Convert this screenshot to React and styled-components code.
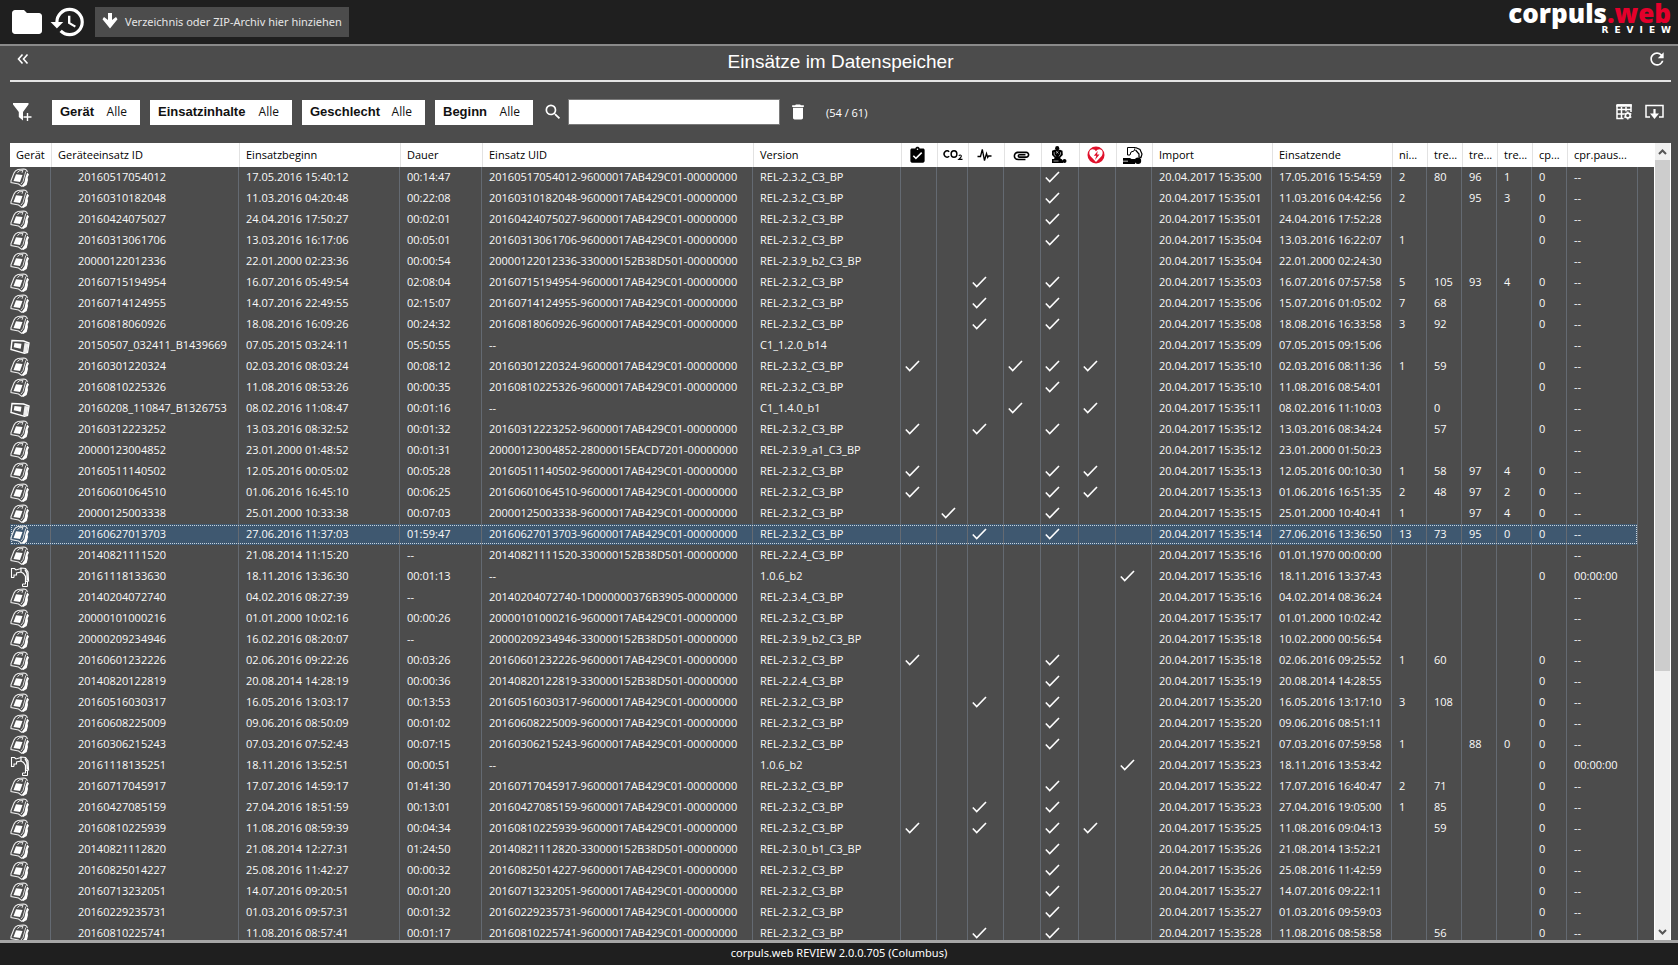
import React from "react";
import styled, { createGlobalStyle, css } from "styled-components";
import { MdFolder, MdHistory, MdRefresh, MdSearch, MdDelete, MdAssignmentTurnedIn, MdAttachment } from "react-icons/md";

const Global = createGlobalStyle`
  *, *::before, *::after { box-sizing: border-box; }
  html, body { margin: 0; background: #4c4c4c; }
  body, button, input {
    font-family: "Open Sans", "Noto Sans", sans-serif;
    font-size: 11px;
    color: #fff;
  }
  svg { display: block; flex: none; }
`;

const Page = styled.div`
  display: flex;
  flex-direction: column;
  height: 100vh;
  overflow: hidden;
`;

const TopBar = styled.header`
  display: flex;
  align-items: center;
  height: 46px;
  flex: none;
  padding: 0 7px 0 9px;
  background: #1f1f1f;
  border-bottom: 2px solid #8a8a8a;
`;

const IconButton = styled.button`
  display: flex;
  align-items: center;
  justify-content: center;
  flex: none;
  width: ${(p) => p.$w || 20}px;
  height: ${(p) => p.$h || 20}px;
  padding: 0;
  border: 0;
  background: none;
  color: #fff;
`;

const DropButton = styled.button`
  display: flex;
  align-items: center;
  gap: 7px;
  width: 254px;
  height: 30px;
  margin-left: 4px;
  padding: 0 7px 2px;
  border: 0;
  background: #4c4c4c;
  color: #e6e6e6;
  font-family: "Noto Sans", sans-serif;
  white-space: nowrap;
`;

const Logo = styled.div`
  display: flex;
  flex-direction: column;
  align-items: flex-end;
  align-self: flex-start;
  margin-left: auto;
`;

const Brand = styled.div`
  height: 25px;
  font: 800 26px/26px "Open Sans", sans-serif;
  span { color: #e4002b; }
`;

const BrandSub = styled.div`
  font: 700 9px/10px "DejaVu Sans", sans-serif;
  letter-spacing: 6px;
  margin-right: -6px;
`;

const Heading = styled.div`
  display: grid;
  grid-template-columns: 40px 1fr 40px;
  align-items: center;
  height: 36px;
  flex: none;
  margin: 0 7px 0 10px;
  padding: 0 4px 8px 3px;
  border-bottom: 2px solid #e4e4e4;
  & > :last-child { justify-self: end; }
`;

const Title = styled.h1`
  margin: 0;
  padding: 6px 0 0 1px;
  text-align: center;
  font: 400 19px/20px "Liberation Sans", Arial, sans-serif;
`;

const Toolbar = styled.div`
  display: flex;
  align-items: center;
  height: 61px;
  flex: none;
  padding: 0 14px 1px 12px;
`;

const Filters = styled.div`
  display: flex;
  gap: 10px;
  margin: 0 10px 0 20px;
`;

const FilterButton = styled.button`
  display: flex;
  align-items: center;
  justify-content: space-between;
  width: ${(p) => p.$w}px;
  height: 25px;
  padding: 0 13px 1px 8px;
  border: 0;
  background: #fff;
  color: #111;
  font-size: 12px;
  b { font: 700 13px/20px "Liberation Sans", Arial, sans-serif; }
`;

const SearchLabel = styled.label`
  display: flex;
  align-items: center;
  gap: 5px;
`;

const SearchInput = styled.input`
  width: 212px;
  height: 26px;
  border: 1px solid #7a7a7a;
  background: #fff;
  color: #111;
`;

const Count = styled.span`
  margin-left: 10px;
`;

const Tools = styled.div`
  display: flex;
  gap: 10px;
  margin-left: auto;
`;

const Content = styled.main`
  display: flex;
  flex: 1;
  min-height: 0;
  margin: 0 7px 0 10px;
`;

const TablePane = styled.div`
  flex: 1;
  min-width: 0;
  overflow: hidden;
  padding-right: 16px;
  background: linear-gradient(#fff 24px, transparent 24px);
`;

const Table = styled.table`
  width: 100%;
  table-layout: fixed;
  border-collapse: separate;
  border-spacing: 0;
  color: #fafafa;
`;

const HeadCell = styled.th`
  height: 24px;
  padding: 0 2px 1px 6px;
  border-left: 1px solid #e2e2e2;
  background: #fff;
  color: #000;
  font-weight: 400;
  line-height: 20px;
  text-align: left;
  white-space: nowrap;
  overflow: hidden;
  &:first-child { border-left-color: #fff; padding-left: 5px; }
  ${(p) => p.$icon && css`
    padding: 0 4px 0 0;
    svg { margin: 0 auto; }
  `}
`;

const Row = styled.tr`
  ${(p) => p.$selected && css`
    background: #3f5870;
    outline: 1px dotted #c8d4de;
    outline-offset: -2px;
  `}
`;

const Cell = styled.td`
  height: 21px;
  padding: 0 0 ${(p) => (p.$pad === 0 ? 0 : 2)}px ${(p) => (p.$pad === undefined ? 7 : p.$pad)}px;
  border-right: 1px solid #646a72;
  line-height: 19px;
  white-space: nowrap;
`;

const Scrollbar = styled.div`
  display: flex;
  flex-direction: column;
  width: 17px;
  flex: none;
  border: solid #fff;
  border-width: 0 1px;
  background: #f0f0f0;
`;

const ScrollTrack = styled.div`
  flex: 1;
  min-height: 0;
`;

const ScrollThumb = styled.div`
  height: 67%;
  background: #cdcdcd;
`;

const ScrollArrow = styled(IconButton)`
  width: 15px;
  height: 17px;
  color: #555;
`;

const Footer = styled.footer`
  height: 25px;
  flex: none;
  border-top: 3px solid #a6a6a6;
  background: #1f1f1f;
  font-family: "Noto Sans", sans-serif;
  text-align: center;
  line-height: 20px;
`;

const ArrowDown = () => (
  <svg width="16" height="18" viewBox="0 0 16 18">
    <path d="M6 1h4v7l4-3 1.500 2.200L8 16.500.500 7.200 2 5l4 3z" fill="#fff" />
  </svg>
);

const Chevrons = () => (
  <svg width="12" height="12" viewBox="0 0 12 12" fill="none" stroke="#fff" strokeWidth="1.600">
    <path d="M5.500 1.500 1.500 6l4 4.500M10.500 1.500 6.500 6l4 4.500" />
  </svg>
);

const FilterAdd = () => (
  <svg width="20" height="18" viewBox="0 0 20 18">
    <path d="M1 0h15.500v1.500L11 9v8.500L6.800 14V9L1 1.500z" fill="#fff" />
    <path d="M15.500 10v8M11.500 14h8" stroke="#fff" strokeWidth="1.400" />
  </svg>
);

const TableGear = () => (
  <svg width="16" height="16" viewBox="0 0 16 16" fill="none" stroke="#fff">
    <path d="M1 1h14v7M1 1v13.500h6.500M1 5.500h14M1 10h7M5.500 3v11.500M10 3v4.500" strokeWidth="1.500" />
    <path d="M.300 1.500h15.400" strokeWidth="2.500" />
    <circle cx="11.800" cy="11.500" r="2.400" strokeWidth="1.600" />
    <path d="M11.800 7.500v1.300M11.800 14.200v1.300M8.300 9.500l1.100.600M14.200 12.900l1.100.600M8.300 13.500l1.100-.600M14.200 10.100l1.100-.600" strokeWidth="1.500" />
  </svg>
);

const Export = () => (
  <svg width="19" height="16" viewBox="0 0 19 16" fill="none" stroke="#fff" strokeWidth="1.500">
    <path d="M5 13H1V1.500h17V13h-4" />
    <path d="M9.500 5v6" strokeWidth="2.200" />
    <path d="M5 9.500h9L9.500 15z" fill="#fff" stroke="none" />
  </svg>
);

const Check = () => (
  <svg width="15" height="12" viewBox="0 0 15 12" fill="none" stroke="#fff" strokeWidth="1.600">
    <path d="M.800 6.500 4.700 10.500 14 1" />
  </svg>
);

const Co2 = () => (
  <svg width="23" height="12" viewBox="-3 0 23 12" fill="none" stroke="#000" strokeWidth="1.400">
    <path d="M6.200 2.700A3 3.200 0 1 0 6.200 7.300" />
    <ellipse cx="11" cy="5" rx="2.900" ry="3.200" />
    <path d="M15.800 6.800q1.400-1.400 2.400-.300.700 1.200-2.400 3.900h3.700" strokeWidth="1.100" />
  </svg>
);

const Pulse = () => (
  <svg width="15" height="14" viewBox="0 0 15 14" fill="none" stroke="#000" strokeWidth="1.300">
    <path d="M.500 8.500h3l1.800-7 2.200 11 2-7 1.200 4 .900-1.500h2.900" />
  </svg>
);

const Cpr = () => (
  <svg width="16" height="18" viewBox="0 0 16 18">
    <ellipse cx="6.200" cy="2.300" rx="2.100" ry="2.200" />
    <path d="M1 4.800 3.500 3.800h5.500l2.500 1 .300 4.200-2.500 2.500.500 2H3l.500-2L1 9z" />
    <path d="M3.200 6.200v2l1.500 2.200M9.500 6.200v2l-1.500 2.200M5 5.200l2.500 2.300M7.500 5.200 5 7.500" fill="none" stroke="#fff" strokeWidth=".600" />
    <path d="M1 13h9.500l1.500 1.500V17H1z" />
    <path d="M2.500 15h5" stroke="#fff" strokeWidth=".600" />
    <circle cx="13.500" cy="15" r="2" />
  </svg>
);

const HeartBolt = () => (
  <svg width="18" height="18" viewBox="0 0 18 18">
    <circle cx="9" cy="9" r="8.500" fill="#e0112b" />
    <path d="M9 16 3.300 10C1.300 7 2.500 3.300 5.500 3.300 7.200 3.300 8.300 4.200 9 5.500c.7-1.300 1.800-2.200 3.500-2.200 3 0 4.200 3.700 2.200 6.700z" fill="#fff" />
    <path d="M10.800 5 6.800 9.800h2.500L8 14l4.500-5.500H10z" fill="#e0112b" />
  </svg>
);

const CprMachine = () => (
  <svg width="20" height="19" viewBox="0 0 20 19">
    <path d="M4.500 9V1.500h8L11 5l-3 1-1 3z" fill="#fff" stroke="#000" strokeWidth="1" />
    <path d="M12.500 1.500 17 3.500l2 4.500-1 3.500-2-.500V8l-3.500-4" fill="#fff" stroke="#000" strokeWidth="1.200" />
    <path d="M0 12h7l1.500 1H12v5H0v-2.500h5v-.700H0z" />
    <circle cx="15" cy="14.800" r="3.200" />
  </svg>
);

const Monitor = () => (
  <svg width="20" height="20" viewBox="0 0 20 20" fill="none" stroke="#eee">
    <path d="M12 18.500 8.500 16 1 14.500V12.500L4 5Q5 2.500 8 1.500L13.500 1Q17 1.200 17.300 4" strokeWidth="1.100" />
    <path d="M7.500 4.800 9 2.800l4-.300-1 2.300M15.800 3.500 13 13.500l-2 2.500" strokeWidth=".900" />
    <path d="M6 6.300l6.500.700-2.500 7-6.500-1z" fill="#fff" stroke="none" />
    <path d="M17.200 4.500 19 6.500l-1.300 2.800L18 12l-1.300 5-3.500 2-1.700-.800L14.500 14l1-5z" fill="#fff" stroke="none" />
  </svg>
);

const Tablet = () => (
  <svg width="20" height="20" viewBox="0 0 20 20">
    <path d="M2 4.500 13.500 5 19 7l-1.500 9.500-3 .800L1 13.500z" fill="none" stroke="#fff" strokeWidth="1.400" />
    <path d="M4.500 7l7 .800-.800 5-7-1.600z" fill="#fff" />
    <path d="M14.500 7 13 17l4-.500L18.500 7.500z" fill="#eee" />
  </svg>
);

const Arm = () => (
  <svg width="20" height="20" viewBox="0 0 20 20" fill="none" stroke="#fff">
    <path d="M4 10.500H1.500V1.500h3L6 3l5-1.500M4 10.500V8h2.500V6L11 5" strokeWidth="1.100" />
    <path d="M11 1l4.500.500L18 5l.500 9-3 .500v-5L13.500 6.500 11 5z" strokeWidth="1.200" />
    <path d="M15 2.500l2 4 .300 7" strokeWidth="1.500" />
    <path d="M12.500 17h3v-2.500h2v5h-5z" strokeWidth="1" />
  </svg>
);

const devices = { m: Monitor, t: Tablet, a: Arm };

const columns = [
  [41, "Gerät"], [188, "Geräteeinsatz ID"], [161, "Einsatzbeginn"], [82, "Dauer"],
  [271, "Einsatz UID"], [148, "Version"],
  [36, <MdAssignmentTurnedIn size={19} />], [31, <Co2 />], [36, <Pulse />],
  [37, <MdAttachment size={19} />], [38, <Cpr />], [37, <HeartBolt />], [36, <CprMachine />],
  [120, "Import"], [120, "Einsatzende"], [35, "ni..."], [35, "tre..."], [35, "tre..."],
  [35, "tre..."], [35, "cp..."], [71, "cpr.paus..."],
];

const A = "-96000017AB429C01-00000000";
const B = "-330000152B38D501-00000000";
const R = "REL-2.3.2_C3_BP";

// device, id, begin, duration, uid suffix or full uid, version, content flags, import second, end, values
const missions = [
  ["m", "20160517054012", "17.05.2016 15:40:12", "00:14:47", A, R, "e", "35:00", "17.05.2016 15:54:59", "2", "80", "96", "1", "0"],
  ["m", "20160310182048", "11.03.2016 04:20:48", "00:22:08", A, R, "e", "35:01", "11.03.2016 04:42:56", "2", "", "95", "3", "0"],
  ["m", "20160424075027", "24.04.2016 17:50:27", "00:02:01", A, R, "e", "35:01", "24.04.2016 17:52:28", "", "", "", "", "0"],
  ["m", "20160313061706", "13.03.2016 16:17:06", "00:05:01", A, R, "e", "35:04", "13.03.2016 16:22:07", "1", "", "", "", "0"],
  ["m", "20000122012336", "22.01.2000 02:23:36", "00:00:54", B, "REL-2.3.9_b2_C3_BP", "", "35:04", "22.01.2000 02:24:30", "", "", "", "", ""],
  ["m", "20160715194954", "16.07.2016 05:49:54", "02:08:04", A, R, "ce", "35:03", "16.07.2016 07:57:58", "5", "105", "93", "4", "0"],
  ["m", "20160714124955", "14.07.2016 22:49:55", "02:15:07", A, R, "ce", "35:06", "15.07.2016 01:05:02", "7", "68", "", "", "0"],
  ["m", "20160818060926", "18.08.2016 16:09:26", "00:24:32", A, R, "ce", "35:08", "18.08.2016 16:33:58", "3", "92", "", "", "0"],
  ["t", "20150507_032411_B1439669", "07.05.2015 03:24:11", "05:50:55", "--", "C1_1.2.0_b14", "", "35:09", "07.05.2015 09:15:06", "", "", "", "", ""],
  ["m", "20160301220324", "02.03.2016 08:03:24", "00:08:12", A, R, "adef", "35:10", "02.03.2016 08:11:36", "1", "59", "", "", "0"],
  ["m", "20160810225326", "11.08.2016 08:53:26", "00:00:35", A, R, "e", "35:10", "11.08.2016 08:54:01", "", "", "", "", "0"],
  ["t", "20160208_110847_B1326753", "08.02.2016 11:08:47", "00:01:16", "--", "C1_1.4.0_b1", "df", "35:11", "08.02.2016 11:10:03", "", "0", "", "", ""],
  ["m", "20160312223252", "13.03.2016 08:32:52", "00:01:32", A, R, "ace", "35:12", "13.03.2016 08:34:24", "", "57", "", "", "0"],
  ["m", "20000123004852", "23.01.2000 01:48:52", "00:01:31", "-28000015EACD7201-00000000", "REL-2.3.9_a1_C3_BP", "", "35:12", "23.01.2000 01:50:23", "", "", "", "", ""],
  ["m", "20160511140502", "12.05.2016 00:05:02", "00:05:28", A, R, "aef", "35:13", "12.05.2016 00:10:30", "1", "58", "97", "4", "0"],
  ["m", "20160601064510", "01.06.2016 16:45:10", "00:06:25", A, R, "aef", "35:13", "01.06.2016 16:51:35", "2", "48", "97", "2", "0"],
  ["m", "20000125003338", "25.01.2000 10:33:38", "00:07:03", A, R, "be", "35:15", "25.01.2000 10:40:41", "1", "", "97", "4", "0"],
  ["m", "20160627013703", "27.06.2016 11:37:03", "01:59:47", A, R, "ce", "35:14", "27.06.2016 13:36:50", "13", "73", "95", "0", "0"],
  ["m", "20140821111520", "21.08.2014 11:15:20", "--", B, "REL-2.2.4_C3_BP", "", "35:16", "01.01.1970 00:00:00", "", "", "", "", ""],
  ["a", "20161118133630", "18.11.2016 13:36:30", "00:01:13", "--", "1.0.6_b2", "g", "35:16", "18.11.2016 13:37:43", "", "", "", "", "0", "00:00:00"],
  ["m", "20140204072740", "04.02.2016 08:27:39", "--", "-1D000000376B3905-00000000", "REL-2.3.4_C3_BP", "", "35:16", "04.02.2014 08:36:24", "", "", "", "", ""],
  ["m", "20000101000216", "01.01.2000 10:02:16", "00:00:26", A, R, "", "35:17", "01.01.2000 10:02:42", "", "", "", "", ""],
  ["m", "20000209234946", "16.02.2016 08:20:07", "--", B, "REL-2.3.9_b2_C3_BP", "", "35:18", "10.02.2000 00:56:54", "", "", "", "", ""],
  ["m", "20160601232226", "02.06.2016 09:22:26", "00:03:26", A, R, "ae", "35:18", "02.06.2016 09:25:52", "1", "60", "", "", "0"],
  ["m", "20140820122819", "20.08.2014 14:28:19", "00:00:36", B, "REL-2.2.4_C3_BP", "e", "35:19", "20.08.2014 14:28:55", "", "", "", "", "0"],
  ["m", "20160516030317", "16.05.2016 13:03:17", "00:13:53", A, R, "ce", "35:20", "16.05.2016 13:17:10", "3", "108", "", "", "0"],
  ["m", "20160608225009", "09.06.2016 08:50:09", "00:01:02", A, R, "e", "35:20", "09.06.2016 08:51:11", "", "", "", "", "0"],
  ["m", "20160306215243", "07.03.2016 07:52:43", "00:07:15", A, R, "e", "35:21", "07.03.2016 07:59:58", "1", "", "88", "0", "0"],
  ["a", "20161118135251", "18.11.2016 13:52:51", "00:00:51", "--", "1.0.6_b2", "g", "35:23", "18.11.2016 13:53:42", "", "", "", "", "0", "00:00:00"],
  ["m", "20160717045917", "17.07.2016 14:59:17", "01:41:30", A, R, "e", "35:22", "17.07.2016 16:40:47", "2", "71", "", "", "0"],
  ["m", "20160427085159", "27.04.2016 18:51:59", "00:13:01", A, R, "ce", "35:23", "27.04.2016 19:05:00", "1", "85", "", "", "0"],
  ["m", "20160810225939", "11.08.2016 08:59:39", "00:04:34", A, R, "acef", "35:25", "11.08.2016 09:04:13", "", "59", "", "", "0"],
  ["m", "20140821112820", "21.08.2014 12:27:31", "01:24:50", B, "REL-2.3.0_b1_C3_BP", "e", "35:26", "21.08.2014 13:52:21", "", "", "", "", "0"],
  ["m", "20160825014227", "25.08.2016 11:42:27", "00:00:32", A, R, "e", "35:26", "25.08.2016 11:42:59", "", "", "", "", "0"],
  ["m", "20160713232051", "14.07.2016 09:20:51", "00:01:20", A, R, "e", "35:27", "14.07.2016 09:22:11", "", "", "", "", "0"],
  ["m", "20160229235731", "01.03.2016 09:57:31", "00:01:32", A, R, "e", "35:27", "01.03.2016 09:59:03", "", "", "", "", "0"],
  ["m", "20160810225741", "11.08.2016 08:57:41", "00:01:17", A, R, "ce", "35:28", "11.08.2016 08:58:58", "", "56", "", "", "0"],
];

const selectedId = "20160627013703";

function MissionRow({ data }) {
  const [device, id, begin, duration, uid, version, flags, imported, end, ...rest] = data;
  const values = [...rest.slice(0, 5), rest[5] || "--"];
  const Device = devices[device];
  return (
    <Row $selected={id === selectedId}>
      <Cell $pad={0}><Device /></Cell>
      <Cell $pad={27}>{id}</Cell>
      <Cell>{begin}</Cell>
      <Cell>{duration}</Cell>
      <Cell>{uid === "--" ? uid : id + uid}</Cell>
      <Cell>{version}</Cell>
      {["a", "b", "c", "d", "e", "f", "g"].map((f) => (
        <Cell key={f} $pad={4}>{flags.includes(f) && <Check />}</Cell>
      ))}
      <Cell>{"20.04.2017 15:" + imported}</Cell>
      <Cell>{end}</Cell>
      {values.map((v, i) => <Cell key={i}>{v}</Cell>)}
    </Row>
  );
}

const filters = [["Gerät", 88], ["Einsatzinhalte", 142], ["Geschlecht", 123], ["Beginn", 98]];

export default function App() {
  return (
    <Page>
      <Global />
      <TopBar>
        <IconButton $w={36} $h={36} aria-label="Öffnen"><MdFolder size={36} /></IconButton>
        <IconButton $w={46} $h={38} aria-label="Verlauf"><MdHistory size={38} /></IconButton>
        <DropButton><ArrowDown />Verzeichnis oder ZIP-Archiv hier hinziehen</DropButton>
        <Logo>
          <Brand>corpuls<span>.web</span></Brand>
          <BrandSub>REVIEW</BrandSub>
        </Logo>
      </TopBar>
      <Heading>
        <IconButton aria-label="Zurück"><Chevrons /></IconButton>
        <Title>Einsätze im Datenspeicher</Title>
        <IconButton aria-label="Aktualisieren"><MdRefresh size={20} /></IconButton>
      </Heading>
      <Toolbar>
        <IconButton aria-label="Filter hinzufügen"><FilterAdd /></IconButton>
        <Filters>
          {filters.map(([name, w]) => (
            <FilterButton key={name} $w={w}><b>{name}</b>Alle</FilterButton>
          ))}
        </Filters>
        <SearchLabel>
          <MdSearch size={20} />
          <SearchInput type="text" aria-label="Suche" />
        </SearchLabel>
        <IconButton $w={36} aria-label="Löschen"><MdDelete size={20} /></IconButton>
        <Count>(54 / 61)</Count>
        <Tools>
          <IconButton aria-label="Spalten"><TableGear /></IconButton>
          <IconButton aria-label="Exportieren"><Export /></IconButton>
        </Tools>
      </Toolbar>
      <Content>
        <TablePane>
          <Table>
            <colgroup>{columns.map(([w], i) => <col key={i} width={w} />)}</colgroup>
            <thead>
              <tr>
                {columns.map(([, label], i) => (
                  <HeadCell key={i} $icon={typeof label !== "string"}>{label}</HeadCell>
                ))}
              </tr>
            </thead>
            <tbody>{missions.map((m) => <MissionRow key={m[1]} data={m} />)}</tbody>
          </Table>
        </TablePane>
        <Scrollbar>
          <ScrollArrow aria-label="Nach oben">
            <svg width="9" height="6" viewBox="0 0 9 6" fill="none" stroke="currentColor" strokeWidth="2"><path d="M1 5l3.500-3.500L8 5" /></svg>
          </ScrollArrow>
          <ScrollTrack><ScrollThumb /></ScrollTrack>
          <ScrollArrow aria-label="Nach unten">
            <svg width="9" height="6" viewBox="0 0 9 6" fill="none" stroke="currentColor" strokeWidth="2"><path d="M1 1l3.500 3.500L8 1" /></svg>
          </ScrollArrow>
        </Scrollbar>
      </Content>
      <Footer>corpuls.web REVIEW 2.0.0.705 (Columbus)</Footer>
    </Page>
  );
}
